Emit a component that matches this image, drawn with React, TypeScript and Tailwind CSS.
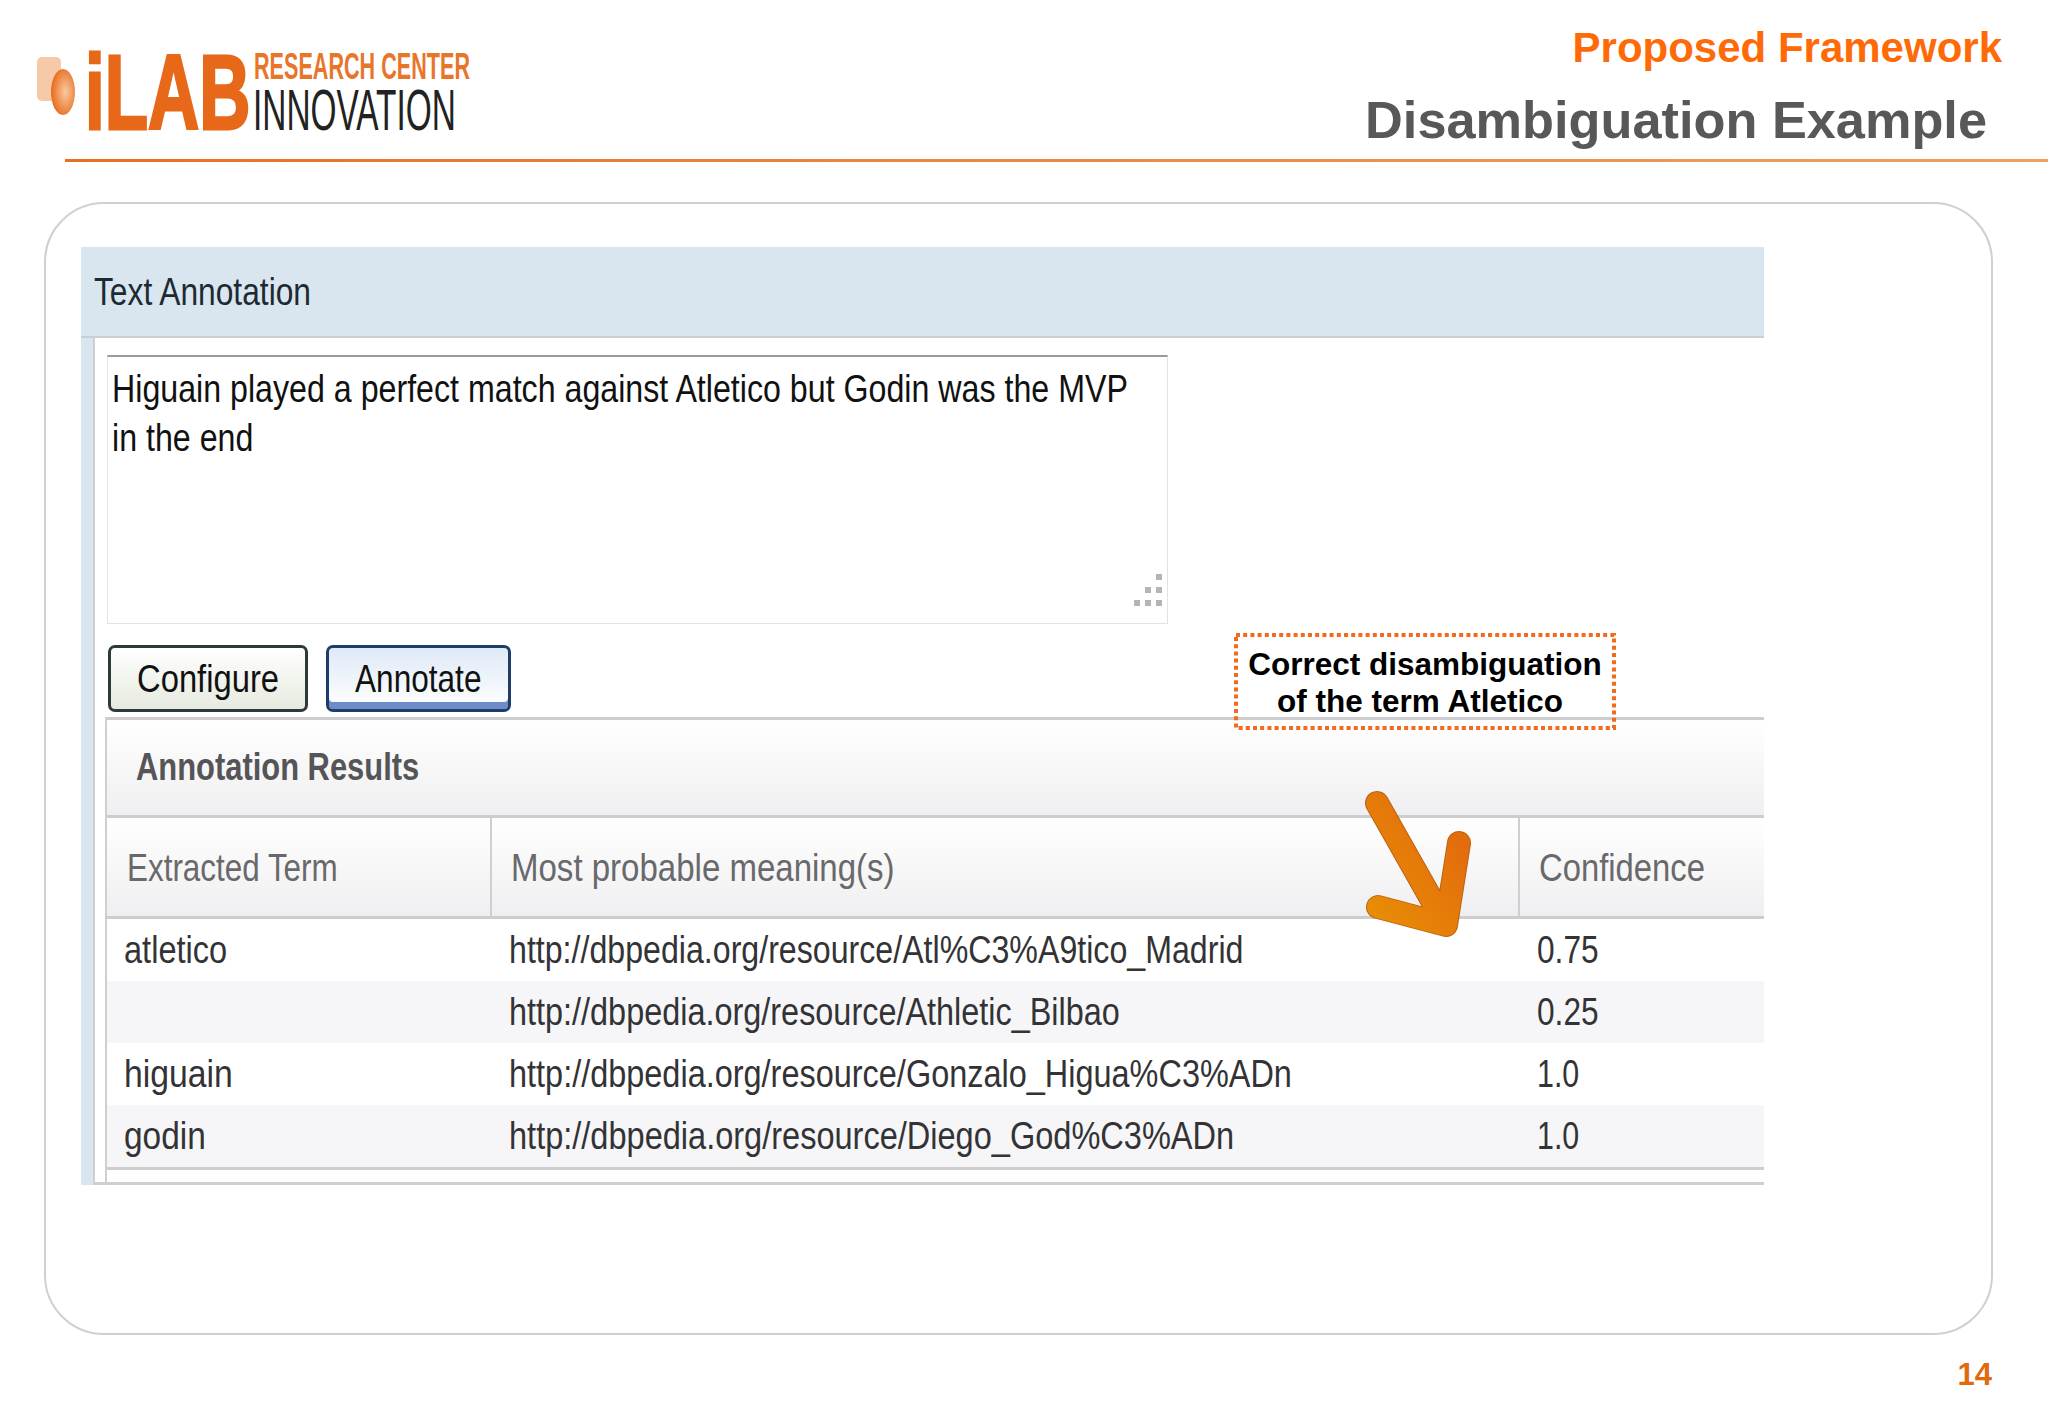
import React from 'react';

const Txt: React.FC<{ className?: string; children?: React.ReactNode }> = ({ className = '', children }) => (
    <span className={`inline-block origin-left whitespace-nowrap ${className}`}>{children}</span>
);

const rows = [
    { term: 'atletico', termFit: 'scale-x-[0.857]', url: 'http://dbpedia.org/resource/Atl%C3%A9tico_Madrid', urlFit: 'scale-x-[0.846]', score: '0.75', scoreFit: 'scale-x-[0.833]', striped: false },
    { term: '', termFit: '', url: 'http://dbpedia.org/resource/Athletic_Bilbao', urlFit: 'scale-x-[0.853]', score: '0.25', scoreFit: 'scale-x-[0.833]', striped: true },
    { term: 'higuain', termFit: 'scale-x-[0.888]', url: 'http://dbpedia.org/resource/Gonzalo_Higua%C3%ADn', urlFit: 'scale-x-[0.854]', score: '1.0', scoreFit: 'scale-x-[0.8]', striped: false },
    { term: 'godin', termFit: 'scale-x-[0.88]', url: 'http://dbpedia.org/resource/Diego_God%C3%ADn', urlFit: 'scale-x-[0.856]', score: '1.0', scoreFit: 'scale-x-[0.8]', striped: true },
];

const Logo: React.FC = () => (
    <div className="flex pl-[37px] pt-[44px]">
        <svg className="w-[50px] h-[80px] shrink-0" viewBox="0 0 50 80">
            <defs>
                <radialGradient id="ball" cx="0.6" cy="0.5" r="0.6">
                    <stop offset="0" stopColor="#f9c9a0" />
                    <stop offset="1" stopColor="#e8691b" />
                </radialGradient>
            </defs>
            <rect x="0" y="13" width="24" height="44" rx="5" fill="#f6c9a8" />
            <ellipse cx="26" cy="48" rx="12" ry="23" fill="url(#ball)" />
        </svg>
        <div className="w-[167px] h-[90px] mt-[4px] leading-[90px] text-[#e8681a] font-bold text-[105px] [-webkit-text-stroke:3px_#e8681a]">
            <Txt className="scale-x-[0.675] -translate-x-[2px]">iLAB</Txt>
        </div>
        <div className="flex flex-col mt-[5px]">
            <Txt className="text-[36px] leading-[36px] font-bold text-[#e8762a] scale-x-[0.6]">RESEARCH CENTER</Txt>
            <Txt className="text-[57px] leading-[50px] text-[#222222] scale-x-[0.586] -translate-x-[1px]">INNOVATION</Txt>
        </div>
    </div>
);

const Button: React.FC<{ label: string; className: string; fit: string }> = ({ label, className, fit }) => (
    <div className={`h-[67px] flex items-center rounded-[7px] border-[3px] pt-[2px] ${className}`}>
        <Txt className={`text-[39px] text-[#111111] ${fit}`}>{label}</Txt>
    </div>
);

export default function App() {
    return (
        <div className="relative w-[2048px] h-[1418px] overflow-hidden bg-white font-['Liberation_Sans',Arial,sans-serif]">
            <div className="flex justify-between h-[159px]">
                <Logo />
                <div className="flex flex-col items-end">
                    <div className="mt-[24px] pr-[46px] text-[42px] leading-[48px] font-bold text-[#ff6a08]">Proposed Framework</div>
                    <div className="mt-[18px] pr-[61px] text-[52.3px] leading-[60px] font-bold text-[#58585a]">Disambiguation Example</div>
                </div>
            </div>
            <div className="ml-[65px] h-[3px] bg-gradient-to-r from-[#e8701e] to-[#eda060]" />

            <div className="ml-[44px] mt-[40px] w-[1949px] h-[1133px] rounded-[60px] border-2 border-[#d0d0d0] pt-[43px] pl-[35px]">
                <div className="w-[1683px] h-[938px] flex flex-col bg-[#d9e5ef]">
                    <div className="h-[91px] flex items-center pl-[13px] pt-[2px] border-b-2 border-[#c8d0d6] shrink-0">
                        <Txt className="text-[38px] text-[#1d2a33] scale-x-[0.835]">Text Annotation</Txt>
                    </div>
                    <div className="ml-[12px] flex-1 flex flex-col bg-white border-b-[3px] border-l-2 border-[#cfcfd2]">
                        <div className="ml-[12px] mt-[17px] w-[1061px] h-[269px] relative border border-[#e2e2e2] border-t-2 border-t-[#9a9a9a] pl-[4px] pt-[7px] text-[39px] leading-[49px] text-[#111111] shrink-0">
                            <Txt className="scale-x-[0.825] block">Higuain played a perfect match against Atletico but Godin was the MVP</Txt>
                            <Txt className="scale-x-[0.825] block">in the end</Txt>
                            <div className="absolute right-[5px] bottom-[17px] grid grid-cols-3 gap-x-[5px] gap-y-[7px]">
                                <i /><i /><i className="w-[6px] h-[6px] bg-[#b5b5b5]" />
                                <i /><i className="w-[6px] h-[6px] bg-[#b5b5b5]" /><i className="w-[6px] h-[6px] bg-[#b5b5b5]" />
                                <i className="w-[6px] h-[6px] bg-[#b5b5b5]" /><i className="w-[6px] h-[6px] bg-[#b5b5b5]" /><i className="w-[6px] h-[6px] bg-[#b5b5b5]" />
                            </div>
                        </div>
                        <div className="flex gap-[18px] ml-[13px] mt-[21px] shrink-0">
                            <Button label="Configure" fit="scale-x-[0.84] translate-x-[26px]" className="w-[200px] border-[#2c3a3c] bg-gradient-to-b from-white to-[#e6eadf]" />
                            <Button label="Annotate" fit="scale-x-[0.81] translate-x-[26px]" className="w-[185px] border-[#1d3d6b] bg-gradient-to-b from-[#dfe9f7] to-white shadow-[inset_0_-7px_0_#6d8cc9]" />
                        </div>
                        <div className="ml-[10px] mt-[5px] flex-1 flex flex-col border-l-2 border-[#cfcfd2]">
                            <div className="h-[101px] flex items-center pl-[29px] border-t-[3px] border-b-[3px] border-[#cdcdd0] bg-gradient-to-b from-white to-[#efeff1]">
                                <Txt className="text-[38px] font-bold text-[#555558] scale-x-[0.813]">Annotation Results</Txt>
                            </div>
                            <div className="h-[101px] grid grid-cols-[383px_1028px_1fr] border-b-[3px] border-[#cdcdd0] bg-gradient-to-b from-white to-[#efeff1] text-[38px] text-[#69696c]">
                                <div className="flex items-center pl-[20px] pt-[3px]"><Txt className="scale-x-[0.827]">Extracted Term</Txt></div>
                                <div className="flex items-center pl-[19px] pt-[3px] border-l-2 border-[#cfcfd2]"><Txt className="scale-x-[0.869]">Most probable meaning(s)</Txt></div>
                                <div className="flex items-center pl-[19px] pt-[3px] border-l-2 border-[#cfcfd2]"><Txt className="scale-x-[0.863]">Confidence</Txt></div>
                            </div>
                            {rows.map((row, i) => (
                                <div key={i} className={`h-[62px] grid grid-cols-[383px_1028px_1fr] items-center text-[38px] text-[#333336] ${row.striped ? 'bg-[#f6f6f8]' : 'bg-white'}`}>
                                    <div className="pl-[17px]">{row.term && <Txt className={row.termFit}>{row.term}</Txt>}</div>
                                    <div className="pl-[19px]"><Txt className={row.urlFit}>{row.url}</Txt></div>
                                    <div className="pl-[19px]"><Txt className={row.scoreFit}>{row.score}</Txt></div>
                                </div>
                            ))}
                            <div className="flex-1 border-t-[3px] border-[#cdcdd0]" />
                        </div>
                    </div>
                </div>
            </div>

            <div className="mt-[22px] pr-[56px] text-right text-[31px] leading-[36px] font-bold text-[#e06a10]">14</div>

            <div className="absolute left-[1234px] top-[633px] w-[382px] h-[97px] pt-[3px] flex flex-col items-center justify-center text-[31.5px] leading-[37px] font-bold text-black">
                <svg className="absolute inset-0 w-full h-full" viewBox="0 0 382 97" fill="none">
                    <rect x="2" y="2" width="378" height="93" stroke="#f26a1b" strokeWidth="4" strokeDasharray="4 3.2" />
                </svg>
                <div>Correct disambiguation</div>
                <div className="pr-[10px]">of the term Atletico</div>
            </div>

            <svg className="absolute left-[1360px] top-[785px] w-[120px] h-[170px]" viewBox="0 0 120 170" fill="none">
                <defs>
                    <linearGradient id="arrow" gradientUnits="userSpaceOnUse" x1="10" y1="130" x2="105" y2="60">
                        <stop offset="0" stopColor="#e88d05" />
                        <stop offset="1" stopColor="#e36c0d" />
                    </linearGradient>
                </defs>
                <path d="M17 18 L86 140 M99 58 L86 140 L18 122" stroke="#b9640f" strokeWidth="24" strokeLinecap="round" strokeLinejoin="round" />
                <path d="M17 18 L86 140 M99 58 L86 140 L18 122" stroke="url(#arrow)" strokeWidth="22" strokeLinecap="round" strokeLinejoin="round" />
            </svg>
        </div>
    );
}
